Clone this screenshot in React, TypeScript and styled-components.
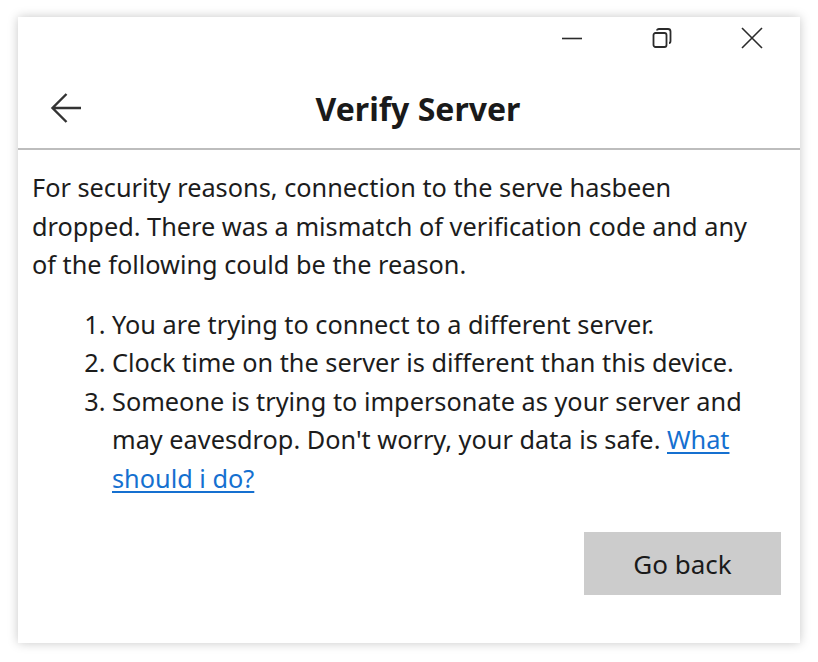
import React from "react";
import styled, { createGlobalStyle } from "styled-components";

const GlobalStyle = createGlobalStyle`
  html, body {
    margin: 0;
    padding: 0;
    background: #ffffff;
  }
  body {
    font-family: "Noto Sans", "Open Sans", "Liberation Sans", sans-serif;
    color: #1c1c1c;
  }
`;

const Page = styled.div`
  padding: 17px 18px;
`;

const Window = styled.div`
  width: 782px;
  height: 626px;
  background: #ffffff;
  box-shadow: 0 0 10px rgba(0, 0, 0, 0.22);
  display: flex;
  flex-direction: column;
`;

const TitleBar = styled.div`
  display: flex;
  justify-content: flex-end;
  height: 42px;
  padding-right: 3px;
`;

const CaptionButton = styled.button`
  width: 90px;
  height: 42px;
  border: none;
  background: transparent;
  display: flex;
  align-items: center;
  justify-content: center;
  color: #2b2b2b;
  padding: 0;
`;

const Header = styled.div`
  display: grid;
  grid-template-columns: 82px 1fr 64px;
  align-items: center;
  height: 89px;
  border-bottom: 2px solid #bdbdbd;
`;

const BackButton = styled.button`
  border: none;
  background: transparent;
  padding: 0 0 0 32px;
  height: 40px;
  display: flex;
  align-items: center;
  color: #333;
  margin-top: 8px;
`;

const Title = styled.h1`
  margin: 10px 0 0;
  text-align: center;
  font-size: 32px;
  font-weight: 700;
  color: #1a1a1a;
`;

const Body = styled.div`
  flex: 1;
  display: flex;
  flex-direction: column;
  padding: 18px 28px 0 14px;
  font-size: 25.3px;
  line-height: 38.5px;
`;

const Paragraph = styled.p`
  margin: 0;
`;

const ReasonList = styled.ol`
  margin: 21px 0 0;
  padding-left: 80px;
`;

const Reason = styled.li`
  padding-left: 0;
`;

const Link = styled.a`
  color: #1570d0;
  text-decoration: underline;
  text-underline-offset: 3px;
`;

const Actions = styled.div`
  display: flex;
  justify-content: flex-end;
  margin: 35px -9px 0 0;
`;

const PrimaryButton = styled.button`
  width: 197px;
  height: 63px;
  border: none;
  background: #cccccc;
  font-family: inherit;
  font-size: 26px;
  color: #1a1a1a;
`;

const MinimizeIcon = () => (
  <svg width="22" height="22" viewBox="0 0 22 22">
    <path d="M1 11.5H21" stroke="currentColor" strokeWidth="1.6" />
  </svg>
);

const RestoreIcon = () => (
  <svg width="22" height="22" viewBox="0 0 22 22" fill="none">
    <rect x="2.5" y="6" width="13" height="14" rx="2" stroke="currentColor" strokeWidth="1.8" />
    <path d="M6 3.5 Q6 2 8 2 H17 Q19.5 2 19.5 4.5 V14 Q19.5 16 18 16" stroke="currentColor" strokeWidth="1.8" />
  </svg>
);

const CloseIcon = () => (
  <svg width="22" height="22" viewBox="0 0 22 22">
    <path d="M1 1L21 21M21 1L1 21" stroke="currentColor" strokeWidth="1.6" />
  </svg>
);

const BackIcon = () => (
  <svg width="32" height="32" viewBox="0 0 32 32" fill="none">
    <path d="M31 16H2.5M16.5 2L2.5 16L16.5 30" stroke="currentColor" strokeWidth="2.4" />
  </svg>
);

export default function App() {
  return (
    <>
      <GlobalStyle />
      <Page>
        <Window>
          <TitleBar>
            <CaptionButton aria-label="Minimize">
              <MinimizeIcon />
            </CaptionButton>
            <CaptionButton aria-label="Restore">
              <RestoreIcon />
            </CaptionButton>
            <CaptionButton aria-label="Close">
              <CloseIcon />
            </CaptionButton>
          </TitleBar>
          <Header>
            <BackButton aria-label="Back">
              <BackIcon />
            </BackButton>
            <Title>Verify Server</Title>
            <span />
          </Header>
          <Body>
            <Paragraph>
              For security reasons, connection to the serve hasbeen dropped.
              There was a mismatch of verification code and any of the
              following could be the reason.
            </Paragraph>
            <ReasonList>
              <Reason>You are trying to connect to a different server.</Reason>
              <Reason>Clock time on the server is different than this device.</Reason>
              <Reason>
                Someone is trying to impersonate as your server and may
                eavesdrop. Don't worry, your data is safe.{" "}
                <Link href="#">What should i do?</Link>
              </Reason>
            </ReasonList>
            <Actions>
              <PrimaryButton>Go back</PrimaryButton>
            </Actions>
          </Body>
        </Window>
      </Page>
    </>
  );
}
